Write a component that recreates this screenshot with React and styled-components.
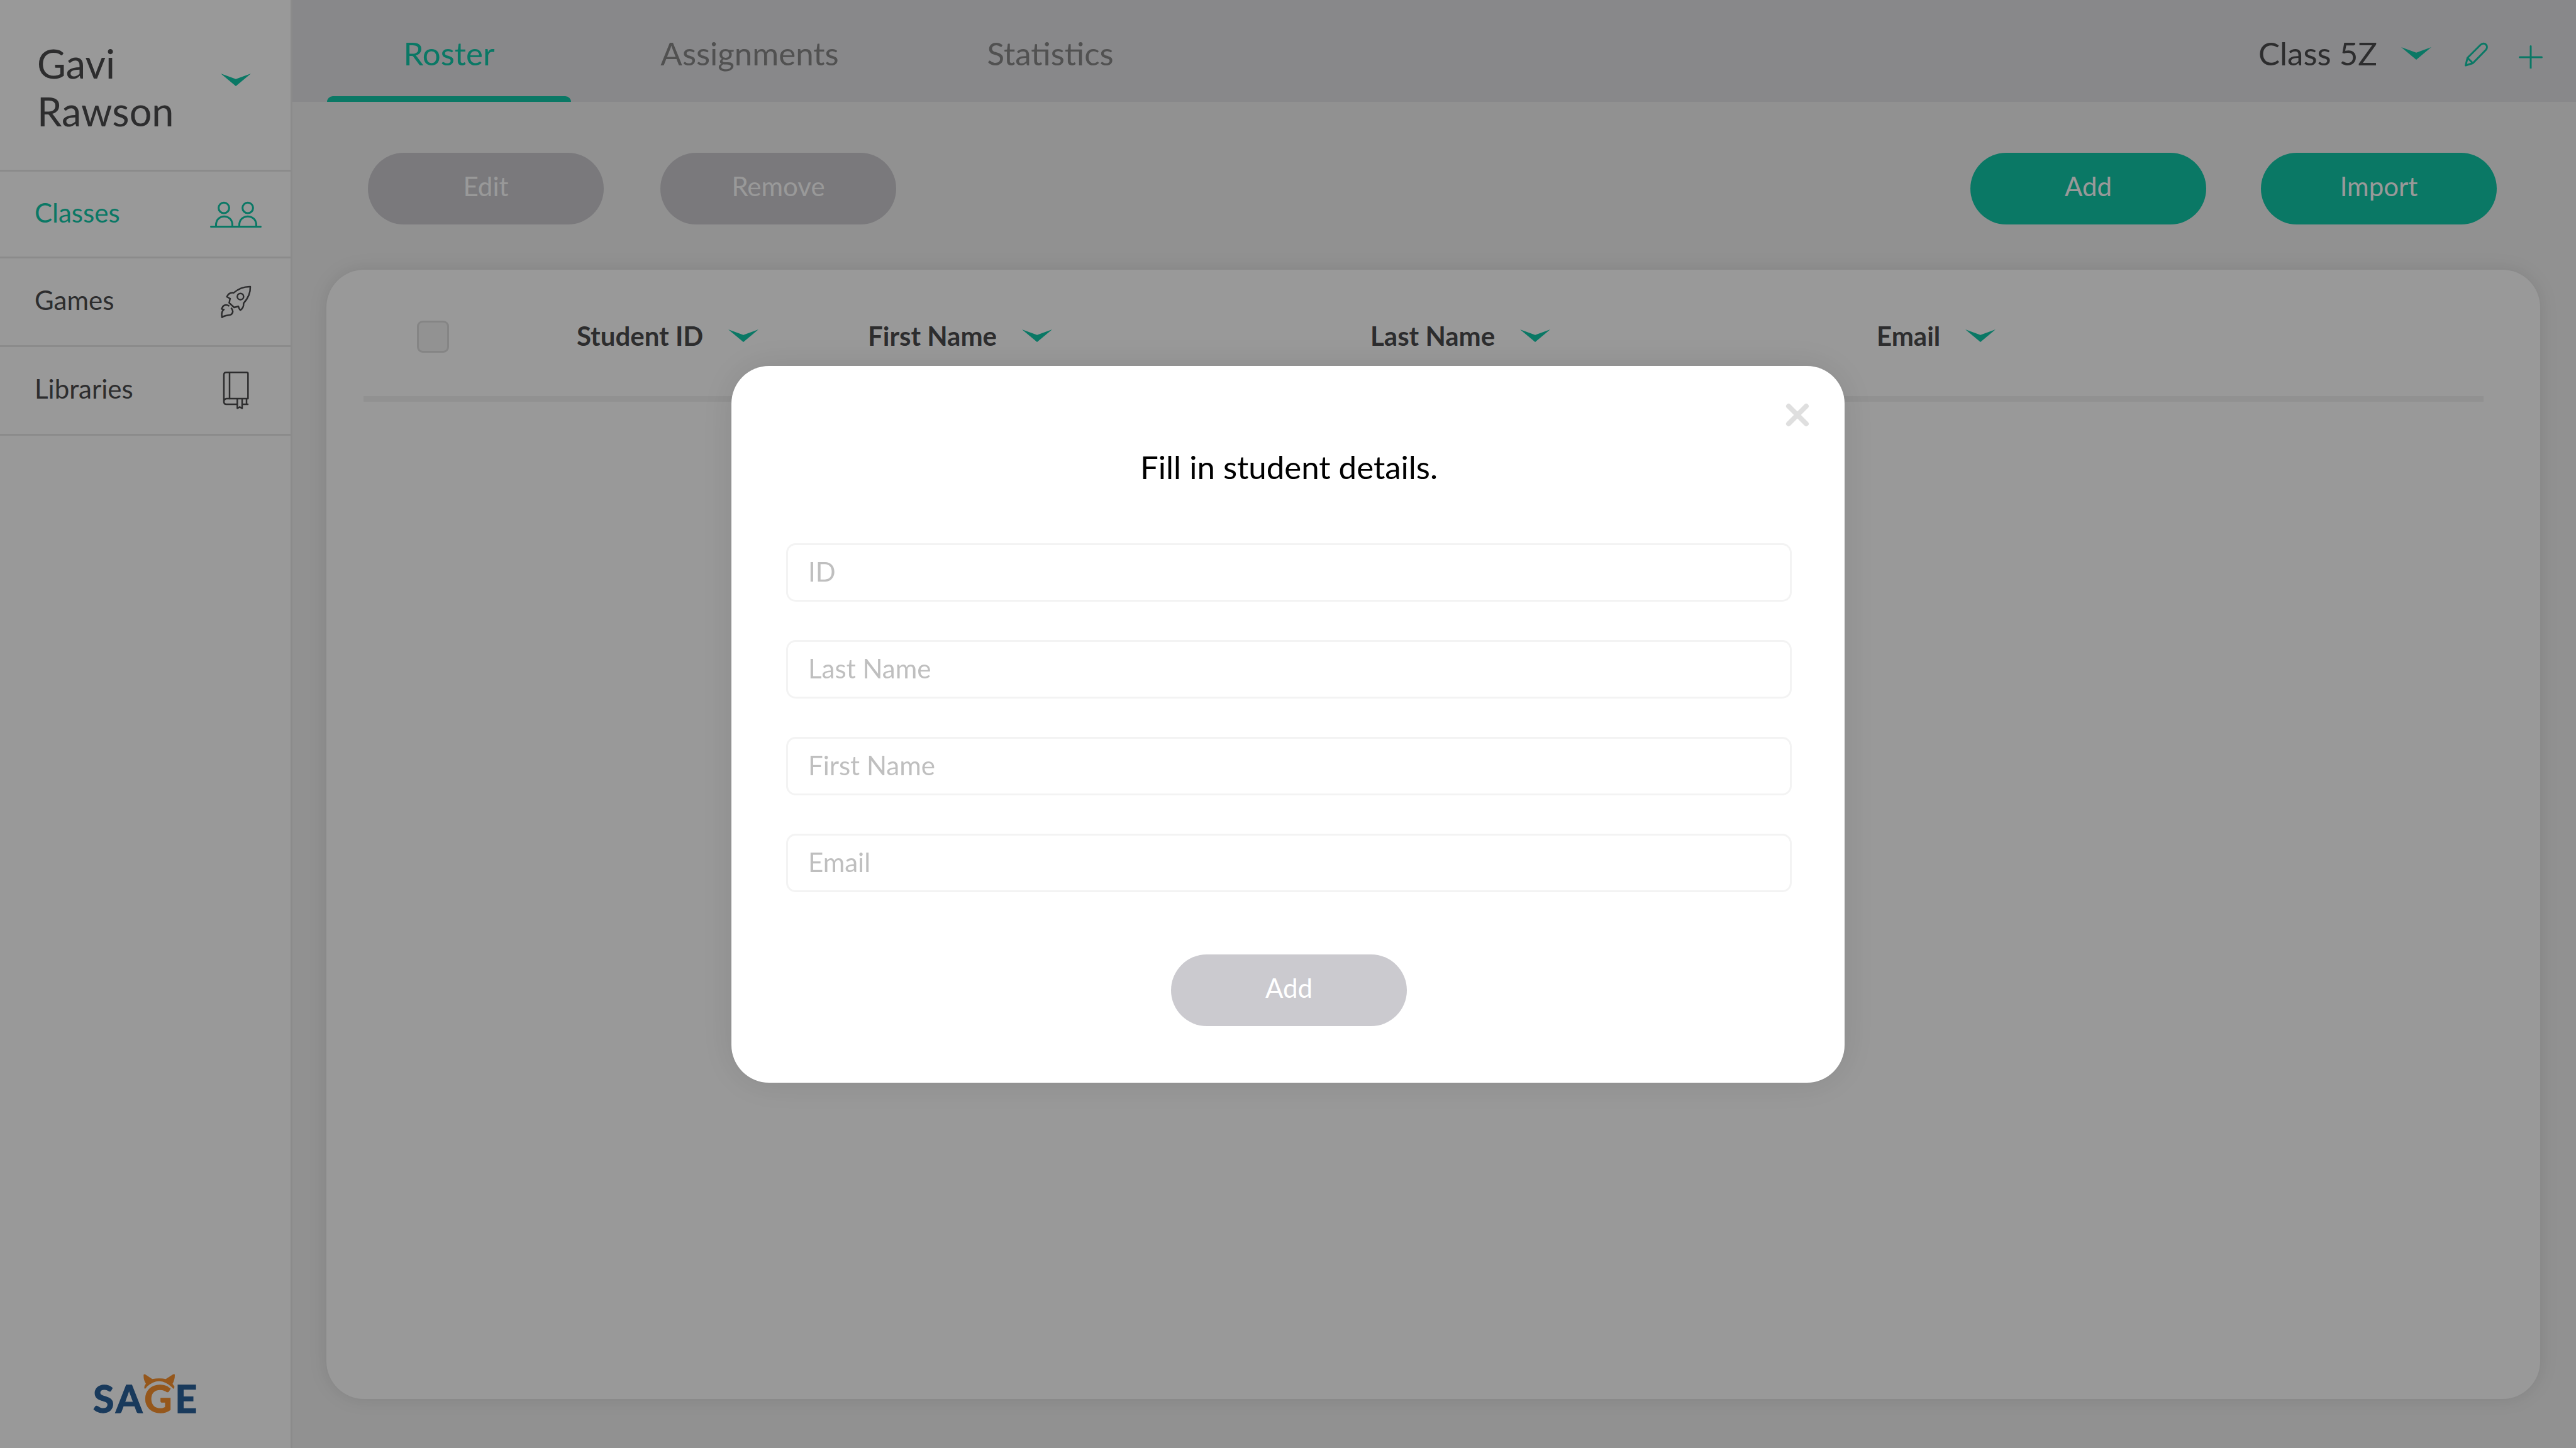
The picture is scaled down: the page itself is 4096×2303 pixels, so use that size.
import React, { useState } from "react";
import styled, { createGlobalStyle } from "styled-components";

const color = {
  teal: "#12c8a9",
  ink: "#4b4b4d",
  muted: "#878787",
  line: "#e8e8e8",
  disabled: "#cbcacf",
  bar: "#e3e3e7",
  page: "#f2f2f2",
};

const GlobalStyle = createGlobalStyle`
  *, *::before, *::after { box-sizing: border-box; }
  body { margin: 0; }
  body, button, input, select {
    font-family: Lato, "Liberation Sans", sans-serif;
    font-size: 42px;
    line-height: 52px;
    color: ${color.ink};
  }
  button { padding: 0; border: 0; background: none; cursor: pointer; }
`;

const Layout = styled.div`
  display: flex;
  min-height: 100vh;
  background: ${color.page};
`;

/* Sidebar */

const Sidebar = styled.aside`
  display: flex;
  flex-direction: column;
  flex: none;
  width: 465px;
  background: #fff;
  border-right: 3px solid ${color.line};
`;

const UserMenu = styled.button`
  display: flex;
  align-items: center;
  justify-content: space-between;
  padding: 63px 63px 55px 59px;
  border-bottom: 3px solid ${color.line};
  font-size: 63px;
  line-height: 76px;
  text-align: left;
`;

const UserName = styled.span`
  width: 240px;
`;

const UserChevron = styled.span`
  display: flex;
  padding-bottom: 24px;
`;

const NavLink = styled.a`
  display: flex;
  align-items: center;
  justify-content: space-between;
  height: 141px;
  padding: 0 46px 0 55px;
  border-bottom: 3px solid ${color.line};
  color: ${(p) => (p.$active ? color.teal : color.ink)};
  text-decoration: none;

  &:first-child { height: 138px; }
`;

const NavLabel = styled.span`
  padding-bottom: 6px;
`;

const NavIcon = styled.span`
  display: flex;
  justify-content: center;
  width: 82px;
`;

const LogoArea = styled.div`
  display: flex;
  justify-content: center;
  margin-top: auto;
  padding-bottom: 35px;
`;

/* Top bar */

const Main = styled.main`
  display: flex;
  flex-direction: column;
  flex: 1;
  min-width: 0;
`;

const TopBar = styled.header`
  display: flex;
  justify-content: space-between;
  height: 162px;
  padding: 0 50px 0 55px;
  background: ${color.bar};
`;

const Tabs = styled.nav`
  display: flex;
  gap: 90px;
`;

const Tab = styled.a`
  display: flex;
  flex-direction: column;
  justify-content: space-between;
  width: 388px;
  padding-top: 55px;
  font-size: 51px;
  line-height: 60px;
  text-align: center;
  text-decoration: none;
  color: ${(p) => (p.$active ? color.teal : color.muted)};

  &::after {
    content: "";
    height: 9px;
    border-radius: 9px 9px 0 0;
    background: ${(p) => (p.$active ? color.teal : "transparent")};
  }
`;

const ClassTools = styled.div`
  display: flex;
  align-items: center;
  gap: 36px;
  padding-top: 8px;
`;

const ClassPicker = styled.label`
  display: flex;
  align-items: center;
  gap: 38px;
  margin-right: 12px;
`;

const ClassSelect = styled.select`
  appearance: none;
  padding: 0;
  border: 0;
  background: none;
  font-size: 51px;
  line-height: 60px;
`;

const IconButton = styled.button`
  display: flex;
  color: ${color.teal};
`;

/* Roster */

const Toolbar = styled.div`
  display: flex;
  justify-content: space-between;
  padding: 81px 126px 72px 120px;
`;

const ButtonGroup = styled.div`
  display: flex;
  gap: ${(p) => p.$gap}px;
`;

const PillButton = styled.button`
  width: 375px;
  height: 114px;
  padding-bottom: 8px;
  border-radius: 57px;
  background: ${color.teal};
  color: #fff;

  &:disabled { background: ${color.disabled}; cursor: default; }
`;

const Card = styled.section`
  flex: 1;
  margin: 0 57px 78px 54px;
  padding: 0 90px 0 59px;
  border-radius: 60px;
  background: #fff;
  box-shadow: 0 0 30px rgba(0, 0, 0, 0.1);
`;

const Table = styled.table`
  width: 100%;
  table-layout: fixed;
  border-collapse: separate;
  border-spacing: 0;
`;

const HeadCell = styled.th`
  width: ${(p) => (p.$width ? `${p.$width}px` : "auto")};
  height: 210px;
  padding: 8px 0 0 ${(p) => p.$indent || 0}px;
  border-bottom: 9px solid ${color.page};
  text-align: left;
  vertical-align: middle;
`;

const SortButton = styled.button`
  display: flex;
  align-items: center;
  gap: 40px;
  font-weight: 700;
`;

const Checkbox = styled.input`
  display: block;
  appearance: none;
  width: 51px;
  height: 51px;
  margin: 4px 0 0;
  border: 3px solid #dedede;
  border-radius: 9px;
  background: #f3f3f3;
`;

/* Dialog */

const Backdrop = styled.div`
  position: fixed;
  inset: 0;
  display: flex;
  align-items: center;
  justify-content: center;
  background: rgba(0, 0, 0, 0.4);
`;

const Dialog = styled.form`
  position: relative;
  display: flex;
  flex-direction: column;
  align-items: center;
  width: 1770px;
  padding: 131px 84px 90px 87px;
  border-radius: 60px;
  background: #fff;
  box-shadow: 0 0 60px rgba(0, 0, 0, 0.1);
`;

const CloseButton = styled.button`
  position: absolute;
  top: 59px;
  right: 56px;
  display: flex;
  color: #dfdfdf;
`;

const DialogTitle = styled.h2`
  margin: 0 0 91px;
  font-size: 51px;
  font-weight: 400;
  line-height: 60px;
  color: #000;
`;

const Fields = styled.div`
  display: flex;
  flex-direction: column;
  gap: 61px;
  align-self: stretch;
  margin-bottom: 99px;
`;

const Field = styled.input`
  width: 100%;
  height: 93px;
  padding: 0 32px 2px;
  border: 3px solid #f3f3f3;
  border-radius: 15px;
  background: #fff;
  outline: none;

  &::placeholder { color: #bfbfbf; opacity: 1; }
`;

/* Icons */

const Chevron = () => (
  <svg width="48" height="20" viewBox="0 0 48 20" aria-hidden="true">
    <path d="M0 0 24 8.7 48 0 24 20Z" fill={color.teal} />
  </svg>
);

const PeopleIcon = () => (
  <svg width="82" height="44" viewBox="334 318 82 44" fill="none" stroke="currentColor" strokeWidth="3" strokeLinecap="round">
    <circle cx="356" cy="329.7" r="8.4" />
    <circle cx="394" cy="329.7" r="8.4" />
    <path d="M343.5 359V357C343.5 338.700 369.500 338.700 369.500 357V359M380.500 359V357C380.500 338.700 407.500 338.700 407.500 357V359" />
    <path d="M335.500 359.500H414.500" />
  </svg>
);

const RocketIcon = () => (
  <svg width="50" height="54" viewBox="90 72 150 162" fill="none" stroke="currentColor" strokeWidth="7.500" strokeLinecap="round" strokeLinejoin="round">
    <path d="M234 81C205 80 178 90 155 110C140 108 128 116 122 129L138 138C134 146 136 152 133 158L157 180L177 175C180 182 181 189 187 193C198 185 203 176 202 160C222 138 235 112 234 81Z" />
    <circle cx="187" cy="128" r="15" />
    <path d="M131 172C122 165 104 167 101 180Q96 186 97 187L108 190C98 198 96 212 99 227C112 217 128 219 140 215C153 208 153 194 144 184" />
  </svg>
);

const BookIcon = () => (
  <svg width="44" height="62" viewBox="99 484 132 186" fill="none" stroke="currentColor" strokeWidth="7.500" strokeLinecap="round" strokeLinejoin="round">
    <path d="M223 616V497Q223 491 217 491H119Q108 491 108 503V631Q108 643 120 643H170M223 616H120Q108 618 108 631" />
    <path d="M135 491V616M216 618V643M198 643H222" />
    <path d="M172 618V662L183.500 656L195 662V618" />
  </svg>
);

const PencilIcon = () => (
  <svg width="48" height="48" viewBox="0 -3 48 48" fill="none" stroke="currentColor" strokeWidth="3" strokeLinejoin="round">
    <path d="M9.500 28 30 7.500C36.500 1.500 44 9 38.500 15.500L18 36.500 6.500 40Z" />
    <path d="M9.500 28 18 36.500" />
  </svg>
);

const PlusIcon = () => (
  <svg width="48" height="48" viewBox="0 -4 48 48" fill="none" stroke="currentColor" strokeWidth="3" strokeLinecap="round">
    <path d="M8.500 26H43.500M26 8.500V43.500" />
  </svg>
);

const CloseIcon = () => (
  <svg width="38" height="38" viewBox="0 0 38 38" fill="none" stroke="currentColor" strokeWidth="8" strokeLinecap="round">
    <path d="M5 5 33 33M33 5 5 33" />
  </svg>
);

const Logo = () => (
  <svg width="180" height="90" viewBox="125 85 540 270" role="img" aria-label="Sage">
    <g fontFamily="Lato, sans-serif" fontWeight="700" fontSize="183" strokeWidth="4">
      <g fill="#2b6199" stroke="#2b6199">
        <text x="146" y="293">S</text>
        <text x="254" y="293">A</text>
        <text x="537" y="293">E</text>
      </g>
      <text x="390" y="293" fill="#f8922f" stroke="#f8922f">G</text>
    </g>
    <path
      fill="#f8922f"
      d="M387 111Q388 106 395 109L428 131Q462 125 493 131L527 109Q536 105 536 112Q536 135 525 154L534 166L533 176Q528 180 522 170Q462 113 402 168Q396 180 391 176Q388 165 398 153Q386 135 387 111Z"
    />
  </svg>
);

const navItems = [
  { label: "Classes", Icon: PeopleIcon },
  { label: "Games", Icon: RocketIcon },
  { label: "Libraries", Icon: BookIcon },
];

const tabs = ["Roster", "Assignments", "Statistics"];

const columns = [
  { label: "Student ID", width: 463 },
  { label: "First Name", width: 799 },
  { label: "Last Name", width: 805 },
  { label: "Email" },
];

const fields = ["ID", "Last Name", "First Name", "Email"];

export default function App() {
  const [student, setStudent] = useState({});
  const complete = fields.every((name) => student[name]);

  return (
    <>
      <GlobalStyle />
      <Layout>
        <Sidebar>
          <UserMenu type="button" aria-haspopup="menu">
            <UserName>Gavi Rawson</UserName>
            <UserChevron>
              <Chevron />
            </UserChevron>
          </UserMenu>
          <nav>
            {navItems.map(({ label, Icon }, i) => (
              <NavLink key={label} href="#" $active={i === 0}>
                <NavLabel>{label}</NavLabel>
                <NavIcon>
                  <Icon />
                </NavIcon>
              </NavLink>
            ))}
          </nav>
          <LogoArea>
            <Logo />
          </LogoArea>
        </Sidebar>

        <Main>
          <TopBar>
            <Tabs>
              {tabs.map((label, i) => (
                <Tab key={label} href="#" $active={i === 0}>
                  {label}
                </Tab>
              ))}
            </Tabs>
            <ClassTools>
              <ClassPicker>
                <ClassSelect aria-label="Class">
                  <option>Class 5Z</option>
                </ClassSelect>
                <Chevron />
              </ClassPicker>
              <IconButton type="button" aria-label="Edit class">
                <PencilIcon />
              </IconButton>
              <IconButton type="button" aria-label="New class">
                <PlusIcon />
              </IconButton>
            </ClassTools>
          </TopBar>

          <Toolbar>
            <ButtonGroup $gap={90}>
              <PillButton type="button" disabled>Edit</PillButton>
              <PillButton type="button" disabled>Remove</PillButton>
            </ButtonGroup>
            <ButtonGroup $gap={87}>
              <PillButton type="button">Add</PillButton>
              <PillButton type="button">Import</PillButton>
            </ButtonGroup>
          </Toolbar>

          <Card>
            <Table>
              <thead>
                <tr>
                  <HeadCell $width={339} $indent={85}>
                    <Checkbox type="checkbox" aria-label="Select all students" />
                  </HeadCell>
                  {columns.map(({ label, width }) => (
                    <HeadCell key={label} $width={width}>
                      <SortButton type="button">
                        {label}
                        <Chevron />
                      </SortButton>
                    </HeadCell>
                  ))}
                </tr>
              </thead>
            </Table>
          </Card>
        </Main>
      </Layout>

      <Backdrop>
        <Dialog role="dialog" aria-labelledby="dialog-title">
          <CloseButton type="button" aria-label="Close">
            <CloseIcon />
          </CloseButton>
          <DialogTitle id="dialog-title">Fill in student details.</DialogTitle>
          <Fields>
            {fields.map((name) => (
              <Field
                key={name}
                type="text"
                aria-label={name}
                placeholder={name}
                value={student[name] || ""}
                onChange={(e) => setStudent({ ...student, [name]: e.target.value })}
              />
            ))}
          </Fields>
          <PillButton type="submit" disabled={!complete}>Add</PillButton>
        </Dialog>
      </Backdrop>
    </>
  );
}
